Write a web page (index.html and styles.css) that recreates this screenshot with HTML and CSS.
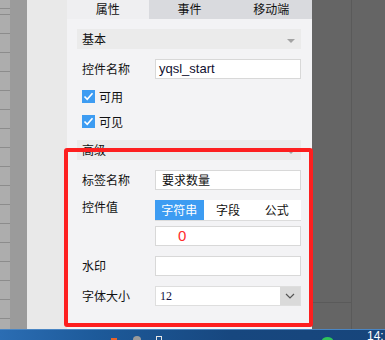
FILE: index.html
```html
<!DOCTYPE html>
<html lang="zh-CN">
<head>
	<meta charset="UTF-8">
	<title>控件属性</title>
	<link rel="stylesheet" href="styles.css">
</head>
<body>
	<div class="screen">
		<div class="desk">
			<div class="ruler"></div>
			<div class="gutter"></div>
			<div class="canvas"></div>
			<div class="panel">
				<div class="tabs">
					<div class="tab on">属性</div>
					<div class="tab">事件</div>
					<div class="tab">移动端</div>
				</div>
				<div class="body">
					<div class="head">基本<i class="tri"></i></div>
					<div class="row">
						<span class="label">控件名称</span>
						<div class="input latin">yqsl_start</div>
					</div>
					<div class="check first">
						<span class="box"><svg width="13" height="13" viewBox="0 0 13 13"><polyline points="2.5,6.5 5.2,9.3 10.5,3.2" fill="none" stroke="#fff" stroke-width="1.6"/></svg></span>可用
					</div>
					<div class="check">
						<span class="box"><svg width="13" height="13" viewBox="0 0 13 13"><polyline points="2.5,6.5 5.2,9.3 10.5,3.2" fill="none" stroke="#fff" stroke-width="1.6"/></svg></span>可见
					</div>
					<div class="head second">高级<i class="tri"></i></div>
					<div class="row">
						<span class="label">标签名称</span>
						<div class="input">要求数量</div>
					</div>
					<div class="row top">
						<span class="label">控件值</span>
						<div class="stack">
							<div class="seg">
								<span class="on">字符串</span>
								<span>字段</span>
								<span>公式</span>
							</div>
							<div class="input zero">0</div>
						</div>
					</div>
					<div class="row">
						<span class="label">水印</span>
						<div class="input"></div>
					</div>
					<div class="row">
						<span class="label">字体大小</span>
						<div class="select">
							<span class="val">12</span>
							<span class="arrow"><svg width="10" height="6" viewBox="0 0 10 6"><polyline points="1,1 5,5 9,1" fill="none" stroke="#555" stroke-width="1.2"/></svg></span>
						</div>
					</div>
				</div>
			</div>
			<div class="side">
				<div class="side-col">
					<div class="side-top"></div>
					<div class="side-bottom"></div>
				</div>
			</div>
		</div>
		<div class="taskbar">
			<i class="ico orange"></i>
			<i class="ico grey"></i>
			<i class="ico doc"></i>
			<i class="ico green"></i>
			<span class="clock">14:</span>
		</div>
		<div class="mark"></div>
	</div>
</body>
</html>
```

FILE: styles.css
```css
html,body{
	margin: 0;
	padding: 0;
}
body{
	font-family: "Noto Sans CJK SC", "Liberation Sans", sans-serif;
	font-size: 12px;
	color: #222;
}
.screen{
	width: 385px;
	height: 340px;
	overflow: hidden;
	position: relative;
	display: flex;
	flex-direction: column;
}
.desk{
	height: 329px;
	display: flex;
}
.ruler{
	width: 10px;
	background: repeating-linear-gradient(to bottom, #8c8c8c 0, #8c8c8c 1px, #adadad 1px, #adadad 19px);
	background-position: 0 14px;
	background-color: #adadad;
}
.gutter{
	width: 17px;
	background: #9b9b9b;
}
.canvas{
	width: 40px;
	background: #e9e9e9;
}
.panel{
	width: 245px;
	background: #f3f3f5;
}
.tabs{
	display: flex;
	height: 19px;
}
.tab{
	flex: 1;
	text-align: center;
	line-height: 17px;
	background: #d9dade;
	color: #111;
}
.tab.on{
	background: #efeff1;
}
.body{
	padding: 10px 11px 0 10px;
}
.head{
	height: 20px;
	line-height: 20px;
	background: #ebebeb;
	padding: 0 6px 0 5px;
	display: flex;
	justify-content: space-between;
	align-items: center;
	color: #111;
}
.head.second{
	margin-top: 12px;
}
.tri{
	width: 0;
	height: 0;
	border-left: 4px solid transparent;
	border-right: 4px solid transparent;
	border-top: 4px solid #a3a3a3;
	margin-top: 3px;
}
.row{
	display: flex;
	align-items: center;
	margin-top: 10px;
	padding-left: 5px;
}
.row.top{
	align-items: flex-start;
}
.label{
	width: 73px;
	line-height: 14px;
	color: #111;
}
.input{
	width: 146px;
	height: 20px;
	box-sizing: border-box;
	background: #fff;
	border: 1px solid #d8d8d8;
	padding-left: 6px;
	line-height: 18px;
	color: #111;
}
.input.latin{
	font-family: "Liberation Sans", sans-serif;
	font-size: 13px;
	padding-left: 3px;
	color: #101030;
}
.input.zero{
	font-family: "Liberation Sans", sans-serif;
	font-size: 15px;
	color: #ff2b2b;
	padding-left: 22px;
	line-height: 17px;
}
.check{
	display: flex;
	align-items: center;
	height: 13px;
	margin-top: 12px;
	padding-left: 5px;
	color: #111;
}
.check.first{
	margin-top: 11px;
}
.box{
	width: 13px;
	height: 13px;
	background: #3d9cf2;
	margin-right: 4px;
	display: flex;
}
.stack{
	display: flex;
	flex-direction: column;
	gap: 5px;
}
.seg{
	width: 146px;
	height: 21px;
	display: flex;
	background: #fff;
	border-bottom: 1px solid #dcdcdc;
	box-sizing: border-box;
}
.seg span{
	flex: 1;
	text-align: center;
	line-height: 20px;
	color: #111;
}
.seg span.on{
	background: #3d9cf2;
	color: #fff;
}
.select{
	width: 146px;
	height: 20px;
	box-sizing: border-box;
	display: flex;
	background: #fff;
	border: 1px solid #dedede;
}
.select .val{
	flex: 1;
	font-family: "Liberation Serif", serif;
	font-size: 12px;
	line-height: 18px;
	padding-left: 4px;
	color: #101040;
}
.select .arrow{
	width: 20px;
	background: #dadada;
	display: flex;
	align-items: center;
	justify-content: center;
}
.side{
	flex: 1;
	background: #656565;
	display: flex;
}
.side-col{
	width: 39px;
	border-right: 1px solid #5a5a5a;
	display: flex;
	flex-direction: column;
}
.side-top{
	height: 302px;
	border-bottom: 1px solid #5a5a5a;
}
.taskbar{
	flex: 1;
	background: linear-gradient(to right, #2b6db3 0, #1d5a9a 25%, #17477f 60%, #17457b 100%);
	border-top: 1px solid #4a86c4;
	position: relative;
	display: flex;
	align-items: flex-end;
}
.ico{
	display: block;
	position: absolute;
	bottom: -3px;
}
.orange{
	left: 111px;
	width: 6px;
	height: 5px;
	background: #e8632a;
}
.grey{
	left: 133px;
	width: 8px;
	height: 7px;
	border-radius: 50%;
	background: #9a9a9a;
}
.doc{
	left: 156px;
	width: 4px;
	height: 5px;
	border: 1px solid #e6e6e6;
}
.green{
	left: 322px;
	width: 11px;
	height: 6px;
	border-radius: 50% 50% 0 0;
	background: #2fc45a;
}
.clock{
	position: absolute;
	left: 367px;
	top: 0;
	color: #fff;
	font-family: "Liberation Sans", sans-serif;
	font-size: 12px;
	line-height: 12px;
}
.mark{
	position: absolute;
	left: 64px;
	top: 148px;
	width: 249px;
	height: 179px;
	box-sizing: border-box;
	border: 4px solid #fd1f1f;
	border-radius: 3px;
}
```
